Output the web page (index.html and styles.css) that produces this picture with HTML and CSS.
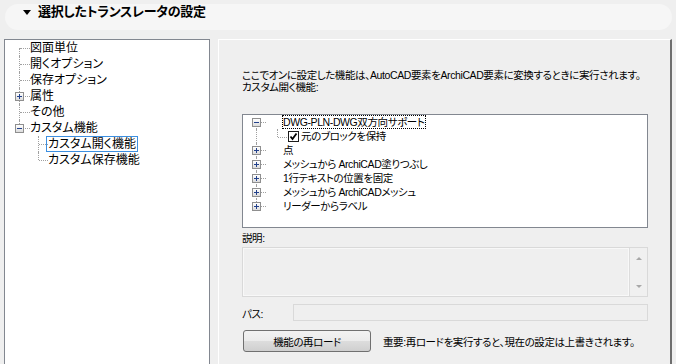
FILE: index.html
```html
<!DOCTYPE html>
<html lang="ja">
<head>
    <meta charset="UTF-8">
    <title>選択したトランスレータの設定</title>
    <link rel="stylesheet" href="styles.css">
</head>
<body>
    <div class="header">
        <span class="tri"></span>
        <span class="title">選択したトランスレータの設定</span>
    </div>
    <div class="main">
        <div class="nav-tree">
            <div class="tn"><span class="tg first"><i class="h"></i></span><span class="tl">図面単位</span></div>
            <div class="tn"><span class="tg"><i class="h"></i></span><span class="tl">開くオプション</span></div>
            <div class="tn"><span class="tg"><i class="h"></i></span><span class="tl">保存オプション</span></div>
            <div class="tn"><span class="tg"><i class="h"></i><i class="box plus"></i></span><span class="tl">属性</span></div>
            <div class="tn"><span class="tg"><i class="h"></i></span><span class="tl">その他</span></div>
            <div class="tn"><span class="tg last"><i class="h"></i><i class="box minus"></i></span><span class="tl">カスタム機能</span></div>
            <div class="tn"><span class="tg child"><i class="h"></i></span><span class="tl sel">カスタム開く機能</span></div>
            <div class="tn"><span class="tg child last"><i class="h"></i></span><span class="tl">カスタム保存機能</span></div>
        </div>

        <div class="panel">
            <p class="intro">ここでオンに設定した機能は、AutoCAD要素をArchiCAD要素に変換するときに実行されます。<br>カスタム開く機能:</p>

            <div class="feat-tree">
                <div class="fr"><span class="fg first"><i class="h"></i><i class="box minus"></i></span><span class="fl focus">DWG-PLN-DWG双方向サポート</span></div>
                <div class="fr">
                    <span class="fg wide"><i class="cv"></i><i class="ch"></i></span>
                    <svg class="chk" width="11" height="11" viewBox="0 0 11 11">
                        <rect x="0.5" y="0.5" width="10" height="10" fill="#fff" stroke="#1c1c1c"/>
                        <path d="M2.5 5.5 L4.5 8 L8.5 2.5" fill="none" stroke="#000" stroke-width="1.8"/>
                    </svg>
                    <span class="fl">元のブロックを保持</span>
                </div>
                <div class="fr"><span class="fg"><i class="h"></i><i class="box plus"></i></span><span class="fl">点</span></div>
                <div class="fr"><span class="fg"><i class="h"></i><i class="box plus"></i></span><span class="fl">メッシュから ArchiCAD塗りつぶし</span></div>
                <div class="fr"><span class="fg"><i class="h"></i><i class="box plus"></i></span><span class="fl">1行テキストの位置を固定</span></div>
                <div class="fr"><span class="fg"><i class="h"></i><i class="box plus"></i></span><span class="fl">メッシュから ArchiCADメッシュ</span></div>
                <div class="fr"><span class="fg last"><i class="h"></i><i class="box plus"></i></span><span class="fl">リーダーからラベル</span></div>
            </div>

            <div class="label">説明:</div>
            <div class="desc">
                <div class="desc-text"></div>
                <div class="scroll">
                    <span class="arr up"></span>
                    <span class="arr down"></span>
                </div>
            </div>

            <div class="path-row">
                <span class="path-label">パス:</span>
                <div class="path-input"></div>
            </div>

            <div class="btn-row">
                <button class="reload-btn">機能の再ロード</button>
                <span class="note">重要:再ロードを実行すると、現在の設定は上書きされます。</span>
            </div>
        </div>
    </div>
</body>
</html>
```

FILE: styles.css
```css
body {
    margin: 0;
    width: 676px;
    height: 364px;
    overflow: hidden;
    background-color: #efefef;
    color: #000;
    font-family: "Liberation Sans", "Noto Sans CJK JP", sans-serif;
    font-feature-settings: "palt";
}

.header {
    display: flex;
    align-items: flex-start;
    height: 26px;
    margin: 4px 4px 0 5px;
    padding-left: 18px;
    border-radius: 13px;
    background-color: #f6f6f6;
}

.tri {
    width: 0;
    height: 0;
    margin-top: 6px;
    border-left: 4px solid transparent;
    border-right: 4px solid transparent;
    border-top: 5px solid #000;
}

.title {
    margin-left: 7px;
    font-size: 13px;
    font-weight: bold;
    letter-spacing: -0.3px;
    line-height: 16px;
}

.main {
    display: flex;
    height: 325px;
    margin-top: 9px;
}

/* left navigation tree */
.nav-tree {
    width: 206px;
    margin-left: 4px;
    box-sizing: border-box;
    border: 1px solid #828790;
    border-bottom: none;
    background-color: #fff;
    font-size: 12px;
}

.tn {
    display: flex;
    align-items: center;
    height: 16px;
}

.tg {
    position: relative;
    flex: none;
    width: 25px;
    height: 16px;
}

.tg::before {
    content: "";
    position: absolute;
    left: 14px;
    top: 0;
    bottom: 0;
    border-left: 1px dotted #a0a0a0;
}

.tg.first::before {
    top: 8px;
}

.tg.last::before {
    bottom: 8px;
}

.tg .h {
    position: absolute;
    left: 15px;
    top: 8px;
    width: 10px;
    border-top: 1px dotted #a0a0a0;
}

.tg.child {
    width: 43px;
}

.tg.child::before {
    left: 33px;
}

.tg.child .h {
    left: 34px;
    width: 9px;
}

.box {
    position: absolute;
    left: 10px;
    top: 4px;
    width: 9px;
    height: 9px;
    box-sizing: border-box;
    border: 1px solid #8f8f8f;
    background: linear-gradient(#ffffff, #dcdcdc);
}

.box::before {
    content: "";
    position: absolute;
    left: 1px;
    top: 3px;
    width: 5px;
    height: 1px;
    background-color: #23418b;
}

.box.plus::after {
    content: "";
    position: absolute;
    left: 3px;
    top: 1px;
    width: 1px;
    height: 5px;
    background-color: #23418b;
}

.tl {
    white-space: nowrap;
    line-height: 14px;
}

.tl.sel {
    margin-left: -2px;
    padding: 0 1px;
    border: 1px solid #3d8fe0;
}

/* right panel */
.panel {
    width: 454px;
    margin-left: 8px;
    box-sizing: border-box;
    padding: 29px 0 0 23px;
    border-left: 1px solid #fff;
    border-top: 1px solid #fff;
    border-right: 2px solid #6e6e6e;
    font-size: 10.5px;
    letter-spacing: -0.4px;
}

.intro {
    margin: 0;
    line-height: 12px;
    white-space: nowrap;
}

.feat-tree {
    width: 406px;
    height: 114px;
    margin-top: 21px;
    box-sizing: border-box;
    border: 1px solid #828790;
    background-color: #fff;
}

.fr {
    display: flex;
    align-items: center;
    height: 14px;
}

.fg {
    position: relative;
    flex: none;
    width: 40px;
    height: 14px;
}

.fg::before {
    content: "";
    position: absolute;
    left: 13px;
    top: 0;
    bottom: 0;
    border-left: 1px dotted #a0a0a0;
}

.fg.first::before {
    top: 7px;
}

.fg.last::before {
    bottom: 7px;
}

.fg .h {
    position: absolute;
    left: 14px;
    top: 7px;
    width: 9px;
    border-top: 1px dotted #a0a0a0;
}

.fg .box {
    left: 9px;
    top: 3px;
}

.fg.wide {
    width: 45px;
}

.fg .cv {
    position: absolute;
    left: 34px;
    top: 0;
    height: 8px;
    border-left: 1px dotted #a0a0a0;
}

.fg .ch {
    position: absolute;
    left: 35px;
    top: 8px;
    width: 9px;
    border-top: 1px dotted #a0a0a0;
}

.chk {
    flex: none;
    margin-right: 2px;
}

.fl {
    white-space: nowrap;
    line-height: 12px;
}

.fl.focus {
    outline: 1px dotted #000;
}

.label {
    margin-top: 4px;
    line-height: 12px;
}

.desc {
    display: flex;
    width: 406px;
    height: 50px;
    margin-top: 3px;
    box-sizing: border-box;
    border: 1px solid #d9d9d9;
}

.desc-text {
    flex: 1;
    border: 1px solid #f8f8f8;
}

.scroll {
    display: flex;
    flex-direction: column;
    justify-content: space-between;
    align-items: center;
    width: 18px;
    padding: 9px 0 8px;
    box-sizing: border-box;
    border-left: 1px solid #dcdcdc;
    background-color: #f0f0f0;
}

.arr {
    width: 0;
    height: 0;
    border-left: 3px solid transparent;
    border-right: 3px solid transparent;
}

.arr.up {
    border-bottom: 3px solid #a8a8a8;
}

.arr.down {
    border-top: 3px solid #a8a8a8;
}

.path-row {
    display: flex;
    align-items: center;
    margin-top: 7px;
}

.path-label {
    width: 51px;
    line-height: 12px;
    margin-top: 3px;
}

.path-input {
    width: 355px;
    height: 17px;
    box-sizing: border-box;
    border: 1px solid #d9d9d9;
    background-color: #efefef;
}

.btn-row {
    display: flex;
    align-items: center;
    margin-top: 9px;
}

.reload-btn {
    width: 128px;
    height: 22px;
    margin-left: 1px;
    padding: 0;
    border: 1px solid #707070;
    border-radius: 3px;
    background: linear-gradient(#f2f2f2 0%, #ebebeb 50%, #dddddd 50%, #cfcfcf 100%);
    font-family: inherit;
    font-feature-settings: "palt";
    font-size: 10.5px;
    letter-spacing: -0.4px;
    color: #000;
}

.note {
    margin-left: 12px;
    white-space: nowrap;
}
```
